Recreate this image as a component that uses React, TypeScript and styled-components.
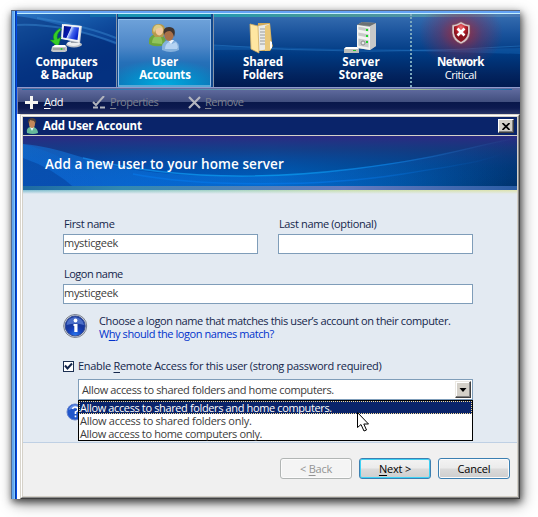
import React from 'react';
import styled, { createGlobalStyle, css } from 'styled-components';

const Global = createGlobalStyle`
  * { box-sizing: border-box; }
  html, body { margin: 0; padding: 0; background: #fff; }
  body { font-family: "Open Sans", "Noto Sans", sans-serif; font-size: 11px; overflow: hidden; }
  u { text-underline-offset: 2px; text-decoration-thickness: 1px; text-decoration-skip-ink: none; }
`;

const tracking = css<{ $track?: number }>`
  letter-spacing: ${p => p.$track ?? -0.37}px;
`;

const Desktop = styled.div`
  width: 538px;
  height: 517px;
  padding: 10px 18px 18px 11px;
  background: #fff;
  overflow: hidden;
`;

const AppWindow = styled.div`
  width: 509px;
  height: 489px;
  display: flex;
  border-top: 1px solid #59657c;
  border-left: 1px solid #536d91;
  background: linear-gradient(#63a2f4 0 2px, #c2efff 2px 3px, #1b4fb2 3px);
  box-shadow: 1px 3px 7px rgba(0, 0, 0, 0.62), 3px 5px 14px rgba(0, 0, 0, 0.38);
`;

const LeftFrame = styled.div`
  width: 5px;
  flex: none;
  background: linear-gradient(90deg, #64a7ee 0 2px, #83c9fb 2px 3px, #0737a4 3px 4px, #004ce8 4px 5px);
`;

const Main = styled.div`
  flex: 1;
  min-width: 0;
  padding-top: 3px;
  background: linear-gradient(#63a2f4 0 2px, #c2efff 2px 3px, #fff 3px);
`;

const Nav = styled.nav`
  position: relative;
  display: grid;
  grid-template-columns: 99px 98px 98px 98px 1fr;
  height: 73px;
  overflow: hidden;
  background: linear-gradient(#376fb1 0, #1c559e 18px, #003a82 40px, #02245f 61px, #001a50);
`;

const NavArt = styled.svg`
  position: absolute;
  inset: 0;
`;

const Tab = styled.div<{ $selected?: boolean; $critical?: boolean }>`
  position: relative;
  display: flex;
  flex-direction: column;
  align-items: center;
  padding-top: 7px;
  ${p => p.$critical && `
    padding-right: 11px;
    border-left: 2px dotted #7ba8bd;
    background: radial-gradient(ellipse 42px 36px at 49px 19px, rgba(190,35,40,.8), rgba(150,35,65,.38) 50%, transparent);
  `}
  ${p => p.$selected && `
    border: solid #8694a8;
    border-width: 0 1px;
    background:
      linear-gradient(90deg, #10488e 0 1px, transparent 1px 94px, #10488e 94px),
      linear-gradient(#1993b2 0 3px, #063773 3px 5px, transparent 5px);
  `}
`;

const TabGlow = styled.div`
  position: absolute;
  inset: 5px 2px 0 1px;
  border: 1px solid #91bce9;
  border-bottom: 2px solid #58a9d6;
  background:
    radial-gradient(ellipse 60px 26px at 50% 100%, #00acdf, rgba(0,151,211,.7) 55%, transparent),
    linear-gradient(#6da1d9, #4d87c8 40%, #2670b8 65%, #126bae);
`;

const TabIcon = styled.svg`
  position: relative;
  flex: none;
  width: 36px;
  height: 33px;
`;

const TabLabel = styled.div`
  position: relative;
  display: flex;
  flex-direction: column;
  align-items: center;
  margin-top: 1px;
  color: #fff;
  font-size: 11.5px;
  font-weight: 700;
  line-height: 13px;
  white-space: nowrap;
`;

const LabelLine = styled.span<{ $track?: number; $light?: boolean }>`
  ${tracking}
  ${p => p.$light && 'font-size: 11px; font-weight: 400; line-height: 14px;'}
`;

const Toolbar = styled.div`
  display: flex;
  align-items: center;
  height: 27px;
  padding: 2px 0 0 7px;
  border-top: 1px solid #8f9bcd;
  border-left: 1px solid #7681b0;
  background:
    linear-gradient(90deg, #1664a8, #3f83b8 30%, #a2bb91 65%, #a2bb91 80%, #1664a8) 4px 1px / 490px 1px no-repeat,
    linear-gradient(#626da1 0, #414e7e 14px, #09174a 14px, #0d1a50 20px, #2d3a6a 27px);
`;

const Action = styled.div<{ $off?: boolean; $width: number; $gap: number }>`
  display: flex;
  align-items: center;
  gap: ${p => p.$gap}px;
  width: ${p => p.$width}px;
  color: ${p => (p.$off ? '#7d818f' : '#fff')};
  letter-spacing: -0.5px;
  white-space: nowrap;
  line-height: 14px;
`;

const Dialog = styled.section`
  width: 500px;
  height: 385px;
  margin-left: 3px;
  border: 1px solid;
  border-color: #d8d4cb #404040 #404040 #d8d4cb;
  background: #e3eaf2;
`;

const DialogInner = styled.div`
  height: 383px;
  border: 1px solid;
  border-color: #fff #8b8b8b #8b8b8b #fff;
`;

const DialogFace = styled.div`
  height: 381px;
  border: 1px solid #d5d1c8;
  display: flex;
  flex-direction: column;
`;

const TitleBar = styled.header`
  display: flex;
  align-items: center;
  height: 19px;
  flex: none;
  padding: 0 3px;
  border-bottom: 1px solid #d5d1c8;
  background: #0a246a;
  color: #fff;
  font-weight: 700;
  font-size: 11.5px;
`;

const TitleText = styled.span`
  flex: 1;
  margin-left: 4px;
  line-height: 16px;
  letter-spacing: -0.2px;
  white-space: nowrap;
`;

const CloseButton = styled.button`
  width: 16px;
  height: 14px;
  padding: 0;
  display: grid;
  place-items: center;
  border: 1px solid;
  border-color: #fff #404040 #404040 #fff;
  background: #d4d0c8;
  box-shadow: inset -1px -1px #808080;
`;

const Banner = styled.div`
  position: relative;
  flex: none;
  height: 54px;
  overflow: hidden;
`;

const BannerArt = styled.svg`
  position: absolute;
  inset: 0;
`;

const BannerTitle = styled.h1`
  position: relative;
  margin: 0;
  padding: 18px 0 0 22px;
  color: #fff;
  font-size: 13.5px;
  font-weight: 600;
  line-height: 20px;
  letter-spacing: 0.08px;
  white-space: nowrap;
`;

const BannerEdge = styled.div`
  flex: none;
  height: 4px;
  background:
    linear-gradient(transparent, #e3eaf2),
    linear-gradient(90deg, #7fbdd0, #a1d3c4 40%, #c8dfad 65%, #dfe3ae);
`;

const Form = styled.div`
  flex: 1;
  padding: 23px 0 0 40px;
  color: #14264b;
`;

const NameRow = styled.div`
  display: flex;
  gap: 20px;
  margin-bottom: 13px;
`;

const Field = styled.label<{ $width: number }>`
  display: block;
  width: ${p => p.$width}px;
`;

const FieldLabel = styled.div<{ $track?: number }>`
  height: 17px;
  padding-left: 1px;
  line-height: 14px;
  white-space: nowrap;
  ${tracking}
`;

const Input = styled.div`
  height: 20px;
  border: 1px solid #7f9db9;
  background: #fff;
  color: #3c3c3c;
  letter-spacing: -0.3px;
  line-height: 16px;
`;

const Hint = styled.div`
  display: flex;
  gap: 11px;
  height: 25px;
  margin-top: 10px;
`;

const HintText = styled.div`
  line-height: 13px;
  white-space: nowrap;
  ${tracking}
`;

const HintLink = styled.a`
  display: block;
  color: #0032cc;
  letter-spacing: -0.42px;
`;

const CheckRow = styled.div`
  display: flex;
  gap: 4px;
  height: 15px;
  margin-top: 20px;
  line-height: 13px;
  letter-spacing: -0.29px;
  white-space: nowrap;
`;

const Checkbox = styled.span`
  display: grid;
  place-items: center;
  width: 11px;
  height: 11px;
  margin-top: 2px;
  border: 1px solid #1c3052;
  background: #fff;
`;

const ComboArea = styled.div`
  position: relative;
  width: 395px;
  margin: 5px 0 0 15px;
`;

const Combo = styled.div`
  display: flex;
  justify-content: space-between;
  height: 21px;
  padding: 1px 1px 1px 3px;
  border: 1px solid #7f9db9;
  background: #fff;
  color: #3c3c3c;
  line-height: 17px;
  white-space: nowrap;
  ${tracking}
`;

const ComboArrow = styled.span`
  display: grid;
  place-items: center;
  width: 16px;
  height: 17px;
  border: 1px solid;
  border-color: #ece9e3 #404040 #404040 #ece9e3;
  background: #d4d0c8;
  box-shadow: inset -1px -1px #808080, inset 1px 1px #fff;
`;

const Options = styled.ul`
  position: absolute;
  top: 21px;
  left: 0;
  width: 395px;
  height: 41px;
  margin: 0;
  padding: 0;
  border: 1px solid #000;
  background: #fff;
  list-style: none;
`;

const Option = styled.li<{ $selected?: boolean; $track?: number }>`
  height: 13px;
  padding-left: ${p => (p.$selected ? 0 : 1)}px;
  color: ${p => (p.$selected ? '#fff' : '#3c3c3c')};
  background: ${p => (p.$selected ? '#0a246a' : '#fff')};
  border: ${p => (p.$selected ? '1px dotted #f5db95' : '0 solid')};
  line-height: ${p => (p.$selected ? 11 : 13)}px;
  white-space: nowrap;
  ${tracking}
`;

const HelpIcon = styled.svg`
  position: absolute;
  left: -12px;
  top: 24px;
`;

const Cursor = styled.svg`
  position: absolute;
  left: 279px;
  top: 33px;
`;

const Footer = styled.footer`
  display: flex;
  justify-content: flex-end;
  flex: none;
  gap: 7px;
  height: 54px;
  padding: 15px 7px 0 0;
  border-top: 1px solid #bfd0e4;
  background: #f0f0f0;
`;

const Button = styled.button<{ $kind?: 'off' | 'primary' }>`
  width: 72px;
  height: 21px;
  padding: 0;
  border: 1px solid ${p => (p.$kind === 'off' ? '#b1b5b4' : '#3c7fb1')};
  border-radius: 3px;
  background: ${p => (p.$kind === 'off' ? '#f4f4f4' : 'linear-gradient(#f3f3f3, #ebebeb 48%, #dbdbdb 52%, #cecece)')};
  box-shadow: ${p => (p.$kind === 'primary' ? 'inset 0 0 0 1px #3ed2f5' : 'inset 0 0 0 1px #fbfbfb')};
  color: ${p => (p.$kind === 'off' ? '#939393' : '#000')};
  font-family: inherit;
  font-size: 11px;
  letter-spacing: -0.2px;
  line-height: 18px;
`;

const ComputerIcon = () => (
  <TabIcon viewBox="0 0 36 33">
    <defs>
      <linearGradient id="scr" x2="1" y2=".4"><stop stopColor="#00107e" /><stop offset=".45" stopColor="#0618b0" /><stop offset=".5" stopColor="#c6d7ff" /><stop offset=".68" stopColor="#4565ed" /><stop offset="1" stopColor="#0826cf" /></linearGradient>
    </defs>
    <ellipse cx="25" cy="23.5" rx="8" ry="3" fill="#b9bec5" />
    <ellipse cx="24.5" cy="22.5" rx="6.5" ry="2.4" fill="#eceef0" />
    <path d="M21 18h7l1 4h-7z" fill="#9ba2ab" />
    <path d="M15 3 33 5 31 22 14 18z" fill="#c8cfd9" /><path d="M13 3 32 5 30 21 12 18z" fill="#f1f3f6" />
    <path d="M15 5 30 6.500 28.500 19 14 16.500z" fill="url(#scr)" />
    <path d="M11 7Q2 13 5 19L1 19 9 26 12 16 8.500 18Q7 13 12 9z" fill="#35ce28" stroke="#128b19" strokeWidth=".6" />
    <path d="M3 26 6 24h10l2 2v4l-2 1H4l-2-1z" fill="#c4c7c8" /><path d="M3 26 6 24h10l1 2z" fill="#fff" /><path d="M4 28h12" stroke="#7d8385" /><circle cx="12.500" cy="28" r="1" fill="#22d72c" />
  </TabIcon>
);

const UsersIcon = () => (
  <TabIcon viewBox="0 0 36 33">
    <path d="M2 23Q1 15 8 13L14 14Q20 16 18 24 8 27 2 23z" fill="#6ea53c" /><path d="M5 22Q5 17 9 15l5 1q2 4 1 7z" fill="#91c45c" />
    <path d="M5 12Q4 3 12 3q7 0 6 8l-2 5-8 0z" fill="#b69a4d" /><ellipse cx="12.300" cy="9.500" rx="3.800" ry="5" fill="#f1c89d" /><path d="M6 9Q7 3 13 4l3 3Q9 6 7 12z" fill="#dccb87" />
    <path d="M15 29Q14 21 21 19h5q7 2 6 10-8 4-17 0z" fill="#85b1dd" /><path d="M18 28q0-5 4-7l3 2 4-2q3 5 1 7z" fill="#b5d3f2" /><path d="m21 19 3 4 3-4z" fill="#edf6ff" />
    <ellipse cx="22" cy="13.500" rx="4.800" ry="6.500" fill="#aa7048" /><path d="M17 14Q15 6 22 6q8 0 5 10-1-5-4-6-5 0-6 4z" fill="#403530" />
  </TabIcon>
);

const UserIcon = () => (
  <svg width="13" height="17" viewBox="0 0 13 17">
    <path d="M1 15Q0 10 4 9h4q4 2 4 6-5 2-11 0z" fill="#66b99a" /><path d="m4 9 2 4 2-4z" fill="#e7ffff" /><ellipse cx="6" cy="5.500" rx="3" ry="4.500" fill="#c2885b" /><path d="M2 6Q1 0 6 0q5 0 4 6L8 3 4 2z" fill="#4d4037" />
  </svg>
);

const FolderIcon = () => (
  <TabIcon viewBox="0 0 36 33">
    <path d="M13 2h12l2 20 1 3-3 5H11z" fill="#d1aa58" /><path d="M13 5 24 3v25l-12 2z" fill="#eaebe8" />
    <path d="M15 8h7M15 11h7M15 14h7M15 17h7M15 20h7M15 23h7" stroke="#9a9c9b" />
    <path d="m20 5 5-2 1 26-6 1z" fill="#eac879" /><path d="M5 3 13 5l1 27-8-4z" fill="#ffe6a1" stroke="#d2ad62" strokeWidth=".8" /><path d="m25 20 2 1v6l-2 1z" fill="#fff" />
  </TabIcon>
);

const ServerIcon = () => (
  <TabIcon viewBox="0 0 36 33">
    <path d="M14 4 19 1 33 2v23l-6 4-13-2z" fill="#a9adac" /><path d="m27 5 6-3v23l-6 4z" fill="#c7c9c9" /><path d="M14 4 19 1l14 1-6 3z" fill="#6b7174" />
    <path d="m14 4 13 2v23l-13-2z" fill="#f1f2f0" /><path d="m15 5 11 2v4L15 9zm0 6 11 2v4l-11-2zm0 6 11 2v8l-11-2z" fill="#c7cac9" stroke="#fff" strokeWidth=".6" />
    <path d="M23 9h2m-2 6h2m-2 6h2" stroke="#21d32c" strokeWidth="2" /><circle cx="20" cy="22" r="2" fill="#e7e9e9" stroke="#8a8d8e" />
    <path d="m1 28 2-2h11l2 2v4H1z" fill="#babdbb" /><path d="m1 28 2-2h11l2 2z" fill="#fff" /><path d="M10 29.500h3" stroke="#20c52c" />
  </TabIcon>
);

const ShieldIcon = () => (
  <TabIcon viewBox="0 0 36 33">
    <defs><radialGradient id="shield" cy=".2"><stop stopColor="#ee7376" /><stop offset=".6" stopColor="#c3232d" /><stop offset="1" stopColor="#8a1420" /></radialGradient></defs>
    <path d="M18 .8Q14 3.500 9 4v8q1 8 9 11 8-3 9-11V4q-5-.5-9-3.200z" fill="#d8c7cb" stroke="#7c5059" strokeWidth=".6" /><path d="M18 2.800Q15 5 11 5.500V12q1 6 7 9 6-3 7-9V5.500Q21 5 18 2.800z" fill="url(#shield)" />
    <path d="m14.500 7.500 7 7m0-7-7 7" stroke="#fff" strokeWidth="2.600" />
  </TabIcon>
);

const NavBackground = () => (
  <NavArt width="503" height="73">
    <defs>
      <linearGradient id="teal"><stop offset=".14" stopColor="#126eaa" /><stop offset=".17" stopColor="#1499bd" /><stop offset=".55" stopColor="#489996" /><stop offset=".85" stopColor="#508fb0" /><stop offset="1" stopColor="#4977b5" /></linearGradient>
      <linearGradient id="leftnav" x2=".5" y2="1"><stop stopColor="#2c75c2" /><stop offset=".35" stopColor="#1557a7" /><stop offset="1" stopColor="#003087" stopOpacity="0" /></linearGradient>
    </defs>
    <path d="M0 0h99v73H0z" fill="#093b8e" /><path d="M0 0h99v73H0z" fill="url(#leftnav)" />
    <path d="M0 2Q40 7 99 31L99 73H0z" fill="#00266e" opacity=".45" />
    <path d="M0 11Q45 9 99 29M20 4Q70 12 99 24" fill="none" stroke="#3c8cd2" strokeWidth="2" opacity=".45" />
    <path d="M197 31Q350 38 503 34V40Q350 35 197 36z" fill="#176bbd" opacity=".38" />
    <path d="M197 31Q350 43 503 32" fill="none" stroke="#2472bc" opacity=".6" />
    <rect x="73" width="430" height="3" fill="url(#teal)" />
  </NavArt>
);

const BannerBackground = () => (
  <BannerArt width="494" height="54">
    <defs>
      <linearGradient id="ban"><stop stopColor="#0744ac" /><stop offset=".25" stopColor="#0056bf" /><stop offset=".5" stopColor="#0060bc" /><stop offset=".75" stopColor="#004d96" /><stop offset="1" stopColor="#003168" /></linearGradient>
      <linearGradient id="top" x2="0" y2="1"><stop stopColor="#2c2b82" /><stop offset=".25" stopColor="#19377e" stopOpacity=".8" /><stop offset=".6" stopColor="#04408f" stopOpacity=".35" /><stop offset="1" stopColor="#004bb2" stopOpacity="0" /></linearGradient>
      <linearGradient id="wave"><stop stopColor="#1482e2" /><stop offset=".4" stopColor="#0aa0f2" /><stop offset=".7" stopColor="#0a7bdb" /><stop offset="1" stopColor="#314486" stopOpacity=".2" /></linearGradient>
      <linearGradient id="wave2"><stop stopColor="#0679ea" /><stop offset=".5" stopColor="#0679ea" /><stop offset="1" stopColor="#0679ea" stopOpacity="0" /></linearGradient>
      <linearGradient id="edge"><stop stopColor="#1e6aa2" /><stop offset=".2" stopColor="#3289b0" /><stop offset=".65" stopColor="#667cc0" /><stop offset="1" stopColor="#2b5da5" /></linearGradient>
      <linearGradient id="fold" x2="1" y2="1"><stop stopColor="#0775dd" /><stop offset="1" stopColor="#0a54cb" stopOpacity="0" /></linearGradient>
      <linearGradient id="sheen"><stop stopColor="#1478df" stopOpacity=".55" /><stop offset=".5" stopColor="#0876e4" stopOpacity=".45" /><stop offset="1" stopColor="#0876e4" stopOpacity="0" /></linearGradient>
    </defs>
    <path d="M0 0h494v54H0z" fill="url(#ban)" /><path d="M0 0h494v54H0z" fill="url(#top)" />
    <path d="M0 8C40 12 60 24 105 33 180 44 260 42 330 33S440 12 494 2V54H0z" fill="url(#sheen)" />
    <path d="M0 8Q45 19 89 54H0z" fill="url(#fold)" opacity=".35" />
    <path d="M0 22Q30 32 54 54H0z" fill="#022d80" opacity=".35" />
    <path d="M60 22C150 44 240 44 330 33S440 12 494 2" fill="none" stroke="url(#wave)" strokeWidth="1.300" opacity=".8" />
    <path d="M110 38C170 50 290 52 380 38S450 26 480 18" fill="none" stroke="url(#wave2)" strokeWidth="1.300" opacity=".6" />
    <path d="M0 50h494v4H0z" fill="url(#edge)" />
  </BannerArt>
);

const InfoIcon = () => (
  <svg width="25" height="25" viewBox="0 0 25 25">
    <defs><radialGradient id="info" cy=".95"><stop stopColor="#2877ef" /><stop offset=".65" stopColor="#1642be" /><stop offset="1" stopColor="#17389f" /></radialGradient></defs>
    <circle cx="12.200" cy="12" r="11.500" fill="#d8dce3" stroke="#767d8c" /><circle cx="12.200" cy="12" r="10" fill="url(#info)" stroke="#344b91" />
    <path d="M3.500 11Q4 4 12 3q8 1 9 8-8-3-17.500 0z" fill="#8cb1fa" opacity=".45" /><circle cx="12.500" cy="6.500" r="1.900" fill="#fff" /><path d="M10.500 10h4v8h-3.200v-6h-.8z" fill="#fff" />
  </svg>
);

export default function App() {
  return (
    <>
      <Global />
      <Desktop>
        <AppWindow>
          <LeftFrame />
          <Main>
            <Nav>
              <NavBackground />
              <Tab><ComputerIcon /><TabLabel><LabelLine $track={-0.15}>Computers</LabelLine><LabelLine $track={-0.25}>&amp; Backup</LabelLine></TabLabel></Tab>
              <Tab $selected><TabGlow /><UsersIcon /><TabLabel><LabelLine $track={0}>User</LabelLine><LabelLine $track={-0.15}>Accounts</LabelLine></TabLabel></Tab>
              <Tab><FolderIcon /><TabLabel><LabelLine $track={0}>Shared</LabelLine><LabelLine $track={-0.2}>Folders</LabelLine></TabLabel></Tab>
              <Tab><ServerIcon /><TabLabel><LabelLine $track={0.1}>Server</LabelLine><LabelLine $track={0.05}>Storage</LabelLine></TabLabel></Tab>
              <Tab $critical><ShieldIcon /><TabLabel><LabelLine $track={-0.5}>Network</LabelLine><LabelLine $light $track={-0.45}>Critical</LabelLine></TabLabel></Tab>
            </Nav>
            <Toolbar>
              <Action $width={67} $gap={6}>
                <svg width="13" height="13"><path d="M6.500 0v13M0 6.500h13" stroke="#f5f5f2" strokeWidth="3" /></svg>
                <span><u>A</u>dd</span>
              </Action>
              <Action $off $width={96} $gap={5}>
                <svg width="13" height="13"><path d="m1 6 3 3 8-9M1 11.500h5M8 11.500h5" fill="none" stroke="#b2b5bd" strokeWidth="2" /></svg>
                <span><u>P</u>roperties</span>
              </Action>
              <Action $off $width={80} $gap={4}>
                <svg width="13" height="13"><path d="m1 1 11 11M12 1 1 12" stroke="#b4b6bf" strokeWidth="2.200" /></svg>
                <span><u>R</u>emove</span>
              </Action>
            </Toolbar>
            <Dialog>
              <DialogInner>
                <DialogFace>
                  <TitleBar>
                    <UserIcon />
                    <TitleText>Add User Account</TitleText>
                    <CloseButton aria-label="Close"><svg width="8" height="7"><path d="m.5 0 7 7m0-7-7 7" stroke="#000" strokeWidth="1.700" /></svg></CloseButton>
                  </TitleBar>
                  <Banner><BannerBackground /><BannerTitle>Add a new user to your home server</BannerTitle></Banner>
                  <BannerEdge />
                  <Form>
                    <NameRow>
                      <Field $width={195}><FieldLabel>First name</FieldLabel><Input>mysticgeek</Input></Field>
                      <Field $width={195}><FieldLabel>Last name (optional)</FieldLabel><Input /></Field>
                    </NameRow>
                    <Field $width={410}><FieldLabel $track={-0.5}>Logon name</FieldLabel><Input>mysticgeek</Input></Field>
                    <Hint>
                      <InfoIcon />
                      <HintText>Choose a logon name that matches this user’s account on their computer.<HintLink>W<u>h</u>y should the logon names match?</HintLink></HintText>
                    </Hint>
                    <CheckRow>
                      <Checkbox><svg width="9" height="9"><path d="M1 3.500 3.500 6.500 8 1.500" fill="none" stroke="#14264b" strokeWidth="2" /></svg></Checkbox>
                      <span>Enable <u>R</u>emote Access for this user (strong password required)</span>
                    </CheckRow>
                    <ComboArea>
                      <HelpIcon width="18" height="18"><circle cx="9" cy="9" r="8" fill="#2056cb" stroke="#6583cf" /><path d="M2.500 7q6-3 13 0Q14 2 9 2T2.500 7" fill="#8bacf0" opacity=".65" /><path d="M6.500 6Q7 4 9 4q3 0 3 2.500Q12 8 9.500 9v2M9.500 12.500v1.800" fill="none" stroke="#fff" strokeWidth="1.600" /></HelpIcon>
                      <Combo>Allow access to shared folders and home computers.<ComboArrow><svg width="8" height="4"><path d="M.5 0h7L4 4z" /></svg></ComboArrow></Combo>
                      <Options>
                        <Option $selected>Allow access to shared folders and home computers.</Option>
                        <Option $track={-0.28}>Allow access to shared folders only.</Option>
                        <Option>Allow access to home computers only.</Option>
                      </Options>
                      <Cursor width="13" height="22"><path d="M.5.5v15l3.500-3 3 6.500 2.500-1-2.700-6h4.700z" fill="#fff" stroke="#000" /></Cursor>
                    </ComboArea>
                  </Form>
                  <Footer>
                    <Button $kind="off">&lt; <u>B</u>ack</Button>
                    <Button $kind="primary"><u>N</u>ext &gt;</Button>
                    <Button>Cancel</Button>
                  </Footer>
                </DialogFace>
              </DialogInner>
            </Dialog>
          </Main>
        </AppWindow>
      </Desktop>
    </>
  );
}
